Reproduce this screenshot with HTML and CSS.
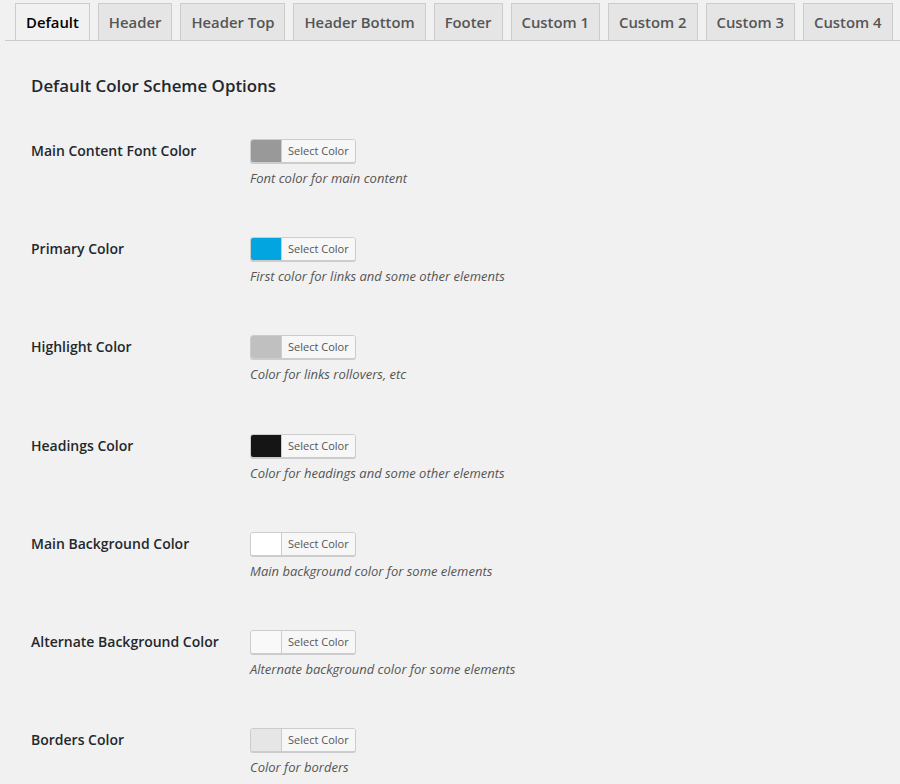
FILE: index.html
```html
<!DOCTYPE html>
<html>
<head>
<meta charset="utf-8">
<link rel="stylesheet" href="styles.css">
</head>
<body>
<div class="wrap">
  <nav class="tabs">
    <a class="tab active">Default</a>
    <a class="tab">Header</a>
    <a class="tab">Header Top</a>
    <a class="tab">Header Bottom</a>
    <a class="tab">Footer</a>
    <a class="tab">Custom 1</a>
    <a class="tab">Custom 2</a>
    <a class="tab">Custom 3</a>
    <a class="tab">Custom 4</a>
    <a class="tab tab-more" aria-hidden="true"></a>
  </nav>
  <section class="panel">
    <h3 class="title">Default Color Scheme Options</h3>
    <div class="row">
      <div class="label">Main Content Font Color</div>
      <div class="field">
        <button class="color-btn"><span class="swatch" style="background:#999999"></span><span class="btn-text">Select Color</span></button>
        <p class="desc">Font color for main content</p>
      </div>
    </div>
    <div class="row">
      <div class="label">Primary Color</div>
      <div class="field">
        <button class="color-btn"><span class="swatch" style="background:#02a5e0"></span><span class="btn-text">Select Color</span></button>
        <p class="desc">First color for links and some other elements</p>
      </div>
    </div>
    <div class="row">
      <div class="label">Highlight Color</div>
      <div class="field">
        <button class="color-btn"><span class="swatch" style="background:#c0c0c0"></span><span class="btn-text">Select Color</span></button>
        <p class="desc">Color for links rollovers, etc</p>
      </div>
    </div>
    <div class="row">
      <div class="label">Headings Color</div>
      <div class="field">
        <button class="color-btn"><span class="swatch" style="background:#151515"></span><span class="btn-text">Select Color</span></button>
        <p class="desc">Color for headings and some other elements</p>
      </div>
    </div>
    <div class="row">
      <div class="label">Main Background Color</div>
      <div class="field">
        <button class="color-btn"><span class="swatch" style="background:#ffffff"></span><span class="btn-text">Select Color</span></button>
        <p class="desc">Main background color for some elements</p>
      </div>
    </div>
    <div class="row">
      <div class="label">Alternate Background Color</div>
      <div class="field">
        <button class="color-btn"><span class="swatch" style="background:#f9f9f9"></span><span class="btn-text">Select Color</span></button>
        <p class="desc">Alternate background color for some elements</p>
      </div>
    </div>
    <div class="row">
      <div class="label">Borders Color</div>
      <div class="field">
        <button class="color-btn"><span class="swatch" style="background:#e6e6e6"></span><span class="btn-text">Select Color</span></button>
        <p class="desc">Color for borders</p>
      </div>
    </div>
  </section>
</div>
</body>
</html>
```

FILE: styles.css
```css
html, body {
  margin: 0;
  padding: 0;
  background: #f1f1f1;
  overflow: hidden;
}
body {
  font-family: "Open Sans", "Liberation Sans", sans-serif;
  color: #444;
  font-size: 13px;
}
.wrap {
  padding: 3px 0 0 5px;
}
.tabs {
  display: flex;
  gap: 8px;
  padding-left: 10px;
  border-bottom: 1px solid #ccc;
  white-space: nowrap;
  overflow: hidden;
}
.tab {
  display: block;
  flex: none;
  border: 1px solid #ccc;
  border-bottom: none;
  background: #e5e5e5;
  color: #555;
  font-size: 14.85px;
  font-weight: 600;
  line-height: 24px;
  padding: 6px 10px 6px;
  margin-bottom: -1px;
  cursor: pointer;
}
.tab-more {
  width: 60px;
  height: 36px;
  padding: 0;
}
.tab.active {
  background: #f1f1f1;
  color: #000;
  border-bottom: 1px solid #f1f1f1;
}
.panel {
  padding: 0 0 0 26px;
}
.title {
  margin: 0;
  padding-top: 33px;
  font-size: 16.9px;
  line-height: 24px;
  font-weight: 600;
  color: #23282d;
}
.row {
  display: flex;
  align-items: flex-start;
}
.title + .row { margin-top: 41px; }
.row + .row { margin-top: 49.2px; }
.label {
  width: 219px;
  flex: none;
  font-size: 14px;
  font-weight: 600;
  line-height: 24px;
  color: #23282d;
}
.field {
  display: flex;
  flex-direction: column;
  align-items: flex-start;
}
.color-btn {
  display: flex;
  height: 24px;
  box-sizing: border-box;
  padding: 0;
  border: 1px solid #ccc;
  border-radius: 3px;
  box-shadow: 0 1px 0 #ccc;
  background: #f7f7f7;
  font-family: inherit;
  overflow: hidden;
}
.swatch {
  width: 30px;
  height: 22px;
}
.btn-text {
  border-left: 1px solid #ccc;
  background: #f7f7f7;
  color: #555;
  font-size: 11px;
  line-height: 22px;
  padding: 0 6px;
}
.desc {
  margin: 5px 0 0;
  font-size: 13px;
  line-height: 20px;
  font-style: italic;
  color: #555;
}
```
